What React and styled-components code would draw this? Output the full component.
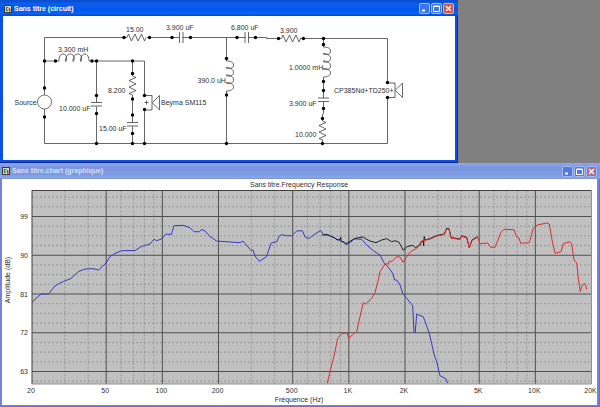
import styled, { createGlobalStyle } from "styled-components";

const GlobalStyle = createGlobalStyle`
  * {
    box-sizing: border-box;
  }
  body {
    margin: 0;
    font-family: "Liberation Sans", Arial, sans-serif;
    font-size: 7px;
  }
`;

const Desktop = styled.main`
  display: flex;
  flex-direction: column;
  min-height: 100vh;
  background: #808080;
`;

const StyledWindow = styled.section`
  width: ${(p) => (p.$active ? "calc(100% - 142px)" : "100%")};
  padding: ${(p) => (p.$active ? "0 3px 3px" : "0 3px 2px 2px")};
  background: ${(p) => (p.$active ? "#0a50e4" : "#7583d8")};
  box-shadow: inset -1px -1px 0 ${(p) => (p.$active ? "#0426a0" : "#6a70cc")};
`;

const TitleBar = styled.header`
  display: flex;
  align-items: center;
  gap: 2px;
  height: 16px;
  margin: ${(p) => (p.$active ? "0 -3px" : "0 -3px 0 -2px")};
  padding: ${(p) => (p.$active ? "1px 4px 0" : "0 3px 0 2px")};
  background: ${(p) =>
    p.$active
      ? "linear-gradient(#0a4cc8, #0a5ff2 25%, #0356e6 60%, #0563fc 85%, #0348c8)"
      : "linear-gradient(#8ea6ec, #7a96e0 30%, #7c9ae2 70%, #88a6ea 90%, #7c90cc)"};
`;

const Title = styled.h1`
  flex: 1;
  margin: 0;
  color: ${(p) => (p.$active ? "#fff" : "#d4e0fa")};
  font-size: 7px;
  font-weight: 700;
  line-height: 12px;
`;

const Buttons = styled.div`
  display: flex;
  gap: 1px;
`;

const TitleButton = styled.button`
  width: 11px;
  height: 11px;
  padding: 0;
  border: 1px solid ${(p) => (p.$active ? "#a8c4f8" : "#a4b8f0")};
  border-radius: 2px;
  background: ${(p) => {
    if (p.$close) return p.$active ? "#dc5234" : "#b4688c";
    return p.$active ? "#3a74ee" : "#5478e0";
  }};

  & svg {
    display: block;
  }
`;

const Body = styled.div`
  background: #fff;

  & svg {
    display: block;
    width: 100%;
    height: auto;
  }
`;

function AppIcon() {
  return (
    <svg width="8" height="8" viewBox="0 0 8 8" aria-hidden="true">
      <rect x="0.5" y="0.5" width="7" height="7" fill="#d8dcc8" stroke="#383838" />
      <path d="M4 2.5H2.5v3H4" fill="none" stroke="#1c8840" strokeWidth="1.2" />
      <path d="M4.5 2l2 2v2.500h-1.500z" fill="#d42c24" />
    </svg>
  );
}

function Window({ title, active, children }) {
  return (
    <StyledWindow $active={active}>
      <TitleBar $active={active}>
        <AppIcon />
        <Title $active={active}>{title}</Title>
        <Buttons>
          <TitleButton $active={active} aria-label="Minimize">
            <svg width="9" height="9" viewBox="0 0 9 9">
              <path d="M2 6.5h3" stroke="#fff" strokeWidth="2" />
            </svg>
          </TitleButton>
          <TitleButton $active={active} aria-label="Maximize">
            <svg width="9" height="9" viewBox="0 0 9 9">
              <path d="M1.5 2.5h6v5h-6zM1.5 2h6" fill="none" stroke="#fff" />
            </svg>
          </TitleButton>
          <TitleButton $active={active} $close aria-label="Close">
            <svg width="9" height="9" viewBox="0 0 9 9">
              <path d="M2 2l5 5M7 2l-5 5" stroke="#fff" strokeWidth="1.3" />
            </svg>
          </TitleButton>
        </Buttons>
      </TitleBar>
      <Body>{children}</Body>
    </StyledWindow>
  );
}

const Wire = styled.path`
  fill: none;
  stroke: #404040;
  stroke-width: 0.8;
`;

const Label = styled.text`
  fill: #303030;
  font-family: "Liberation Sans", Arial, sans-serif;
  font-size: 7px;
  text-anchor: ${(p) => p.$anchor || "start"};
`;

const WIRES = [
  "M44.5 88.5V37.5H127M147 37.5H179.5M182.5 37.5H245.5M248.5 37.5H266.5V38.5H281.5",
  "M300 38.5H387.5V82.5M387.5 97.5V143.5H44.5V117",
  "M44.5 61H59M89 61H144.5V96M144.5 110V143.5",
  "M44.5 88V95M44.5 109V117",
  "M96.5 61V102.5M96.5 106.5V143.5",
  "M132.5 61V76M132.5 95V122.5M132.5 126.5V143.5",
  "M226.5 37.5V61M226.5 91V143.5",
  "M323.5 38.5V47M323.5 77V98M323.5 101.5V113L322.5 115V121M322.5 139.5V143.5",
];

const DOTS = [
  [124, 37.5], [149.5, 37.5], [172, 37.5], [190.5, 37.5], [237, 37.5],
  [255.5, 37.5], [278.5, 38.5], [303.5, 38.5], [323.5, 38.5], [323.5, 44.5],
  [44.5, 61], [55.5, 61], [92, 61], [96.5, 61], [132.5, 61],
  [44.5, 88], [44.5, 117], [96.5, 95.5], [96.5, 113.5],
  [132.5, 73.5], [132.5, 99], [132.5, 115], [132.5, 133.5],
  [144.5, 95.5], [144.5, 109.5], [226.5, 58.5], [226.5, 95],
  [323.5, 81.5], [323.5, 90.5], [323.5, 108.5], [322.5, 118.5],
  [387.5, 82.5], [387.5, 97.5],
  [96.5, 143.5], [132.5, 143.5], [144.5, 143.5], [226.5, 143.5], [322.5, 143.5],
];

const LABELS = [
  [126, 31.5, "15.00"],
  [166, 30, "3.900 uF"],
  [231, 30, "6.800 uF"],
  [280, 32.5, "3.900"],
  [58, 51.5, "3.300 mH"],
  [14.5, 105, "Source"],
  [59, 110.5, "10.000 uF"],
  [108, 92.5, "8.200"],
  [99, 130.5, "15.00 uF"],
  [161, 105, "Beyma SM115"],
  [197.5, 83, "390.0 uH"],
  [289, 69.5, "1.0000 mH"],
  [289, 106, "3.900 uF"],
  [295, 137, "10.000"],
  [334, 92.5, "CP385Nd+TD250+"],
];

function Resistor({ x, y, vertical }) {
  return (
    <Wire
      transform={`translate(${x} ${y})${vertical ? " rotate(90)" : ""}`}
      d="M0 0l1.5 -3.5l3 7l3.5 -7l3 7l3.5 -7l3 7l1.5 -3.5"
    />
  );
}

function Capacitor({ x, y, vertical }) {
  return (
    <Wire
      transform={`translate(${x} ${y})${vertical ? " rotate(90)" : ""}`}
      d="M0 -5.5V5.5M3.5 -5.5V5.5"
    />
  );
}

function Inductor({ x, y, vertical }) {
  return (
    <Wire
      transform={`translate(${x} ${y})${vertical ? " rotate(90)" : ""}`}
      d="M0 0C0 -4 1 -7 4 -7S8 -4 7.5 -1C7 1 6 1 6.5 -1C7 -5 9 -7 11.5 -7S16 -4 15 -1C14.5 1 13.5 1 14 -1C14.5 -5 16 -7 19 -7S23 -4 22.5 -1C22 1 21 1 21.5 -1C22 -5 23.5 -7 26 -7S30 -4 30 0"
    />
  );
}

function Speaker({ x, y }) {
  return (
    <Wire
      transform={`translate(${x} ${y})`}
      d="M0 -7H7.5V7.5H0M8 0L15 -7V7.5L8 0.5"
    />
  );
}

function Circuit() {
  return (
    <svg viewBox="3 16 452 144" role="img" aria-label="Sans titre (circuit)">
      {WIRES.map((d) => (
        <Wire key={d} d={d} />
      ))}
      <circle cx="44.5" cy="102" r="7" fill="#fff" stroke="#505050" strokeWidth="0.8" />
      <Resistor x={127} y={37.5} />
      <Resistor x={281.5} y={38.5} />
      <Resistor x={132.5} y={76} vertical />
      <Resistor x={322.5} y={121} vertical />
      <Capacitor x={179.5} y={37.5} />
      <Capacitor x={245} y={37.5} />
      <Capacitor x={96.5} y={102.5} vertical />
      <Capacitor x={132.5} y={122.5} vertical />
      <Capacitor x={323.5} y={98} vertical />
      <Inductor x={59} y={61} />
      <Inductor x={226.5} y={61} vertical />
      <Inductor x={323.5} y={47} vertical />
      <Speaker x={144.5} y={102.5} />
      <Speaker x={387.5} y={90} />
      <Wire d="M144.5 102.5h4M146.5 100.5v4" />
      {DOTS.map(([x, y]) => (
        <circle key={`${x}-${y}`} cx={x} cy={y} r="1.7" fill="#000" />
      ))}
      {LABELS.map(([x, y, text]) => (
        <Label key={`${x}-${y}`} x={x} y={y}>
          {text}
        </Label>
      ))}
    </svg>
  );
}

const LEFT = 32;
const RIGHT = 591.5;
const TOP = 190.5;
const BOTTOM = 384;

// log scale from 20 Hz to 20 kHz
const freqX = (f) => LEFT + ((RIGHT - LEFT) * Math.log10(f / 20)) / 3;
// 9 dB per division, 99 dB is the highest labelled one
const dbY = (db) => 216.5 + ((99 - db) * 155) / 36;

const MINOR_FREQS = [
  30, 40, 60, 70, 80, 90, 300, 400, 600, 700, 800, 900, 3000, 4000, 6000, 7000,
  8000, 9000,
];
const FREQS = [
  [20, "20"], [50, "50"], [100, "100"], [200, "200"], [500, "500"],
  [1000, "1K"], [2000, "2K"], [5000, "5K"], [10000, "10K"], [20000, "20K"],
];
const LEVELS = [99, 90, 81, 72, 63];
const MINOR_LEVELS = Array.from({ length: 20 }, (_, i) => 103.5 - i * 2.25).filter(
  (db) => db % 9 !== 0
);

const BLUE =
  "32,302 41,294 48.5,294 55,286 60,283 63.5,281.5 71,278.5 78.5,271.5 85,269 93,268.7 98.5,270 106,263 110,256.5 115,253.5 121.5,250.7 135,250.5 141.5,246.5 150,244 154,239.3 156.5,240.7 161.5,239 165.5,234.3 171.5,234.3 174,225.7 183,225.3 190,227.7 194,231.7 199.5,231.7 201.5,229.5 205,231 210,236.5 216.5,241 240,242.7 243,241 248,247 251,250.3 253,250 255,256 259.3,261.3 266.5,256.7 271,243.3 274,242 276.7,242 279.3,236 281.7,234.7 286.7,235.7 291.7,235.7 296.7,231 302.3,230.7 305.3,237.3 309.3,238.3 315,234 320.7,230.3 323.3,235 328.3,235 335,238.3 339.3,240.3 341.3,241.3 344,242.3 346,244.7 350.7,242.3 354,238.9 361.7,239.3 366.7,245 373.3,250.7 380,255 384,262.7 388.3,267.3 392.7,273.3 394.5,280 396.7,280 400,285 402.7,293.3 406.7,298.3 412.7,305.7 414,332.5 415.2,332.5 416.7,314.3 423.3,316.7 429.3,333.3 434.3,355 436.7,361.7 440,375.7 446,379 447.7,383.3";

const BLACK =
  "322.5,235 325,234.4 328.3,235 331,236.3 335,238 337,240 340,239.5 340.7,237 341.3,241.5 344,242 346,243.7 350.7,241 355,238.3 363.3,237 366,239 370,241 376,242.7 381.7,240 386.7,238.7 391.7,241.7 395,240.7 399,242.3 401,246 403.3,250.3 406.7,246.7 412.7,245.3 415.7,247.7 420,245 422,241 423.3,241 423.6,246 424.2,236.5 425,240 430,238.5 436.7,235.5 444.3,234 446.7,228.2 449,228.7 451,237.5 460,239 461.7,235.7 466.7,237.3 469.3,247.7 472,240 477.7,236.6";

const RED =
  "327.3,383.3 330.7,368.3 334.3,355 337.7,338.3 341.7,333.5 347.3,333 348.7,338.3 353.3,334 356.7,331.7 360,316.7 363.3,302.7 365.7,304 371.7,298.3 375,292.7 378,281 380,271.7 385,264 388.3,264 389.5,261 391.7,261.7 396.7,256.7 400,257 403,262.3 406.7,256.7 410.7,251.7 416.7,248.3 421.7,240.9 430,239.2 436.7,236.2 444.3,234.5 446.7,228.9 449,229.2 451,238 460,239.5 461.7,236.2 466.7,237.9 469.3,247.7 472,240.5 477.7,237.2 480,243.7 487.7,243 490.7,247.3 495,247.3 501,232.3 504,229.3 514,229.7 516.7,237 519,238 520.7,243.3 529.3,242.7 533.3,228.3 537.3,225 546.7,223 549.3,224 551.7,238.3 555,253.3 561,251.7 563.3,243.7 570,241.7 571.7,244 574,260 576.7,262.7 578.5,280 580.3,291.7 581.7,286.7 583,285 584,283.5 585.5,284.5 586.7,289.3";

const MajorLine = styled.line`
  stroke: #505050;
  stroke-width: 1;
`;

const MinorLine = styled.line`
  stroke: #8c8c8c;
  stroke-width: 0.8;
  stroke-dasharray: 2 2;
`;

const Curve = styled.polyline`
  fill: none;
  stroke: ${(p) => p.$color};
  stroke-width: 1;
  stroke-linejoin: round;
`;

function Chart() {
  return (
    <svg viewBox="2 179 595 226" role="img" aria-label="Sans titre.Frequency Response">
      <Label x={299} y={187} $anchor="middle">
        Sans titre.Frequency Response
      </Label>
      <rect x={LEFT} y={TOP} width={RIGHT - LEFT} height={BOTTOM - TOP} fill="#c0c0c0" />
      {MINOR_FREQS.map((f) => (
        <MinorLine key={f} x1={freqX(f)} x2={freqX(f)} y1={TOP} y2={BOTTOM} />
      ))}
      {MINOR_LEVELS.map((db) => (
        <MinorLine key={db} x1={LEFT} x2={RIGHT} y1={dbY(db)} y2={dbY(db)} />
      ))}
      {FREQS.slice(1, -1).map(([f]) => (
        <MajorLine key={f} x1={freqX(f)} x2={freqX(f)} y1={TOP} y2={BOTTOM} />
      ))}
      {LEVELS.map((db) => (
        <MajorLine key={db} x1={LEFT} x2={RIGHT} y1={dbY(db)} y2={dbY(db)} />
      ))}
      <path d={`M${LEFT} ${BOTTOM}V${TOP}H${RIGHT}`} fill="none" stroke="#404040" />
      <path d={`M${RIGHT} ${TOP}V${BOTTOM}H${LEFT}`} fill="none" stroke="#909090" />
      <Curve points={BLUE} $color="#3a38c4" />
      <Curve points={BLACK} $color="#202020" />
      <Curve points={RED} $color="#dc2c30" />
      {LEVELS.map((db) => (
        <Label key={db} x={28} y={dbY(db) + 2.5} $anchor="end">
          {db}
        </Label>
      ))}
      {FREQS.map(([f, text]) => (
        <Label key={f} x={freqX(f) - 1} y={392.5} $anchor="middle">
          {text}
        </Label>
      ))}
      <Label x={299} y={402} $anchor="middle">
        Fréquence (Hz)
      </Label>
      <Label transform="translate(10 280) rotate(-90)" $anchor="middle">
        Amplitude (dB)
      </Label>
    </svg>
  );
}

export default function App() {
  return (
    <>
      <GlobalStyle />
      <Desktop>
        <Window title="Sans titre (circuit)" active>
          <Circuit />
        </Window>
        <Window title="Sans titre.chart (graphique)">
          <Chart />
        </Window>
      </Desktop>
    </>
  );
}
